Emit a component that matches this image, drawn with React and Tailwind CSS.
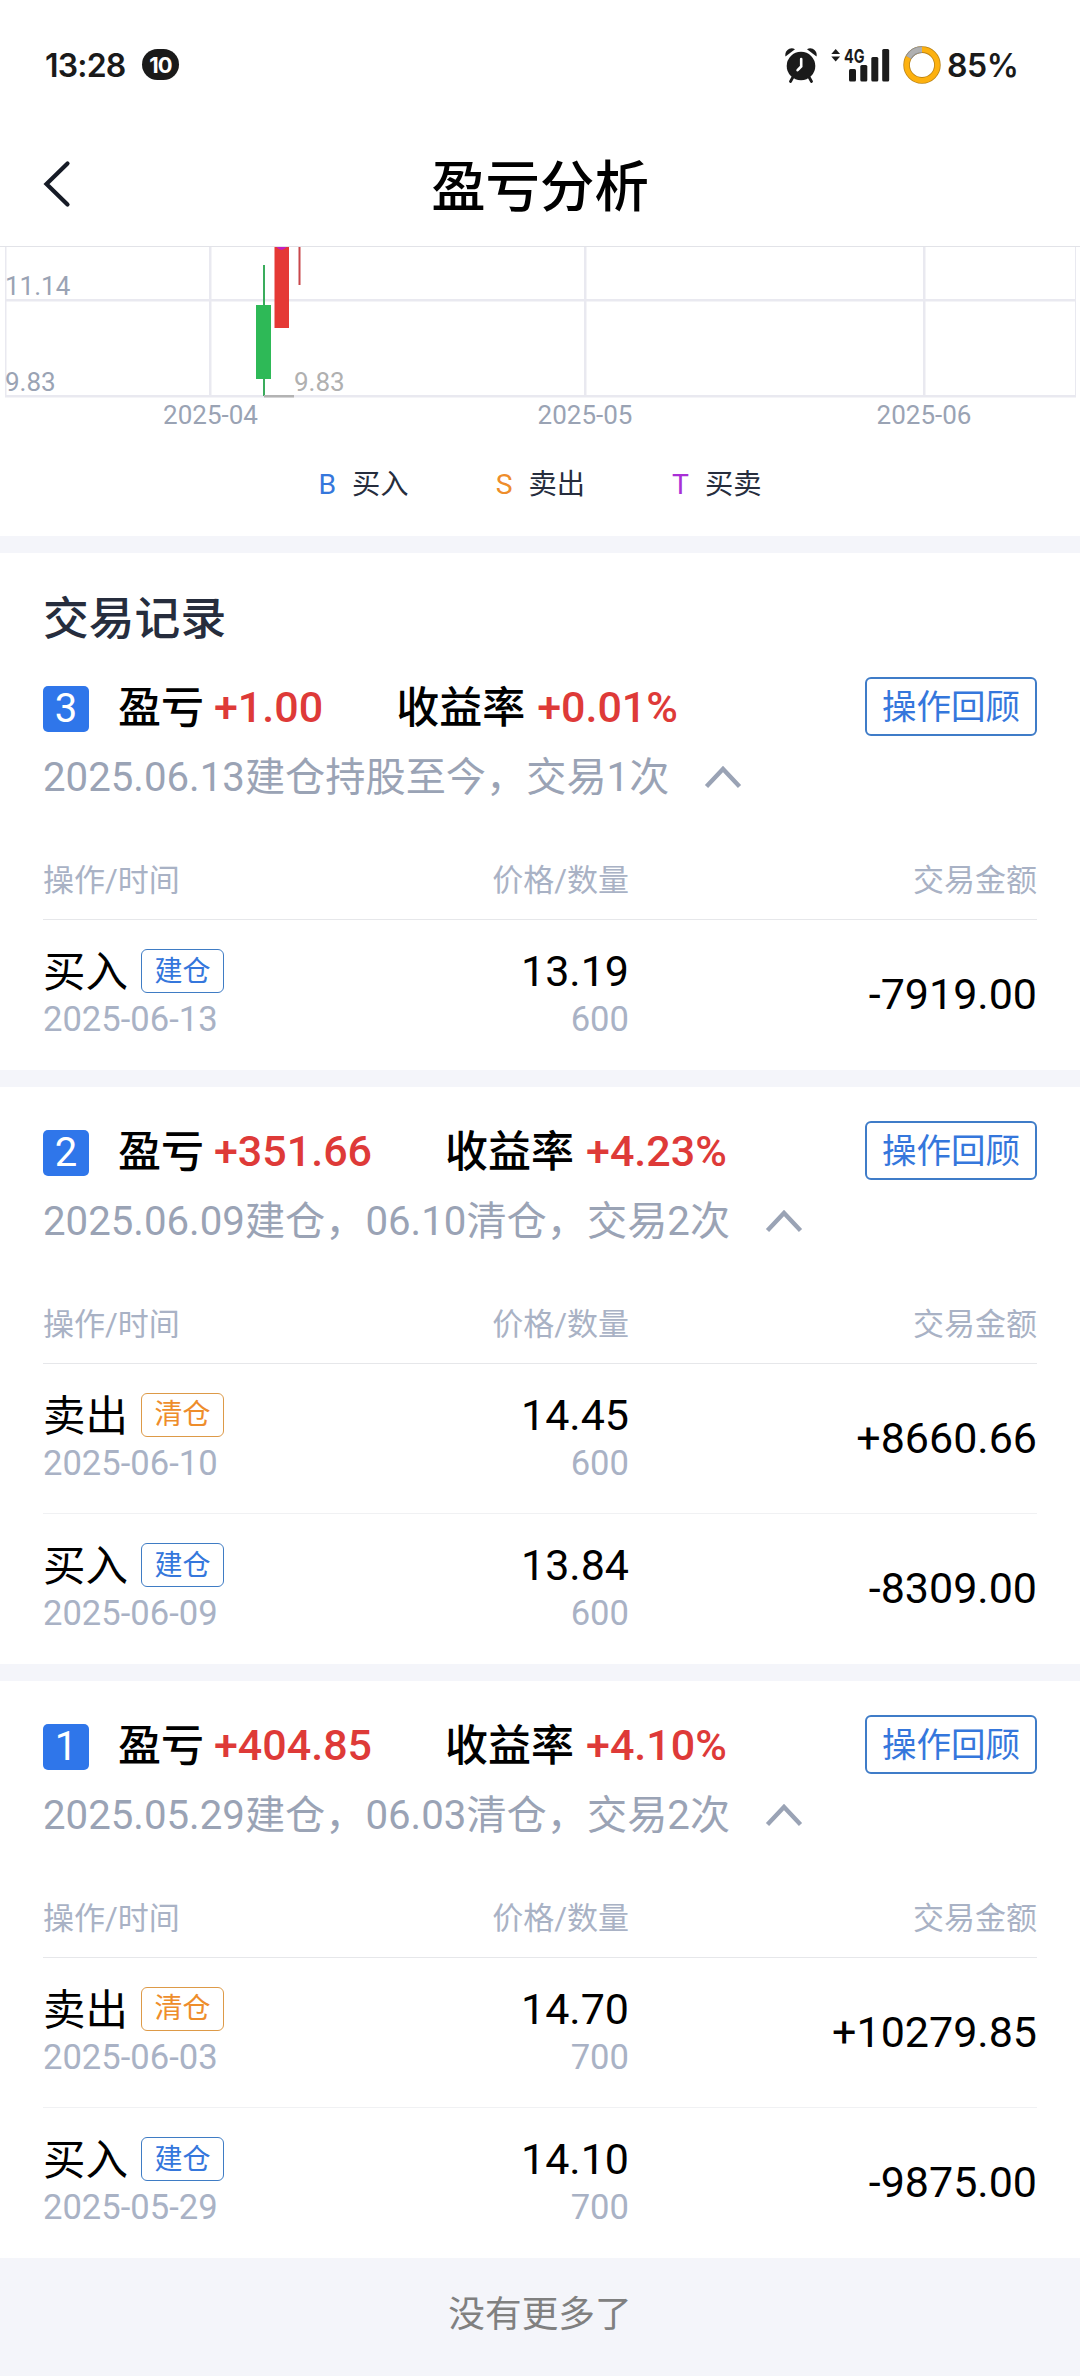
import clsx from "clsx";

const GROUPS = [
  {
    no: 3,
    profit: "+1.00",
    rate: "+0.01%",
    summary: "2025.06.13建仓持股至今，交易1次",
    trades: [{ type: "买入", tag: "建仓", date: "2025-06-13", price: "13.19", qty: "600", amount: "-7919.00" }],
  },
  {
    no: 2,
    profit: "+351.66",
    rate: "+4.23%",
    summary: "2025.06.09建仓，06.10清仓，交易2次",
    trades: [
      { type: "卖出", tag: "清仓", date: "2025-06-10", price: "14.45", qty: "600", amount: "+8660.66" },
      { type: "买入", tag: "建仓", date: "2025-06-09", price: "13.84", qty: "600", amount: "-8309.00" },
    ],
  },
  {
    no: 1,
    profit: "+404.85",
    rate: "+4.10%",
    summary: "2025.05.29建仓，06.03清仓，交易2次",
    trades: [
      { type: "卖出", tag: "清仓", date: "2025-06-03", price: "14.70", qty: "700", amount: "+10279.85" },
      { type: "买入", tag: "建仓", date: "2025-05-29", price: "14.10", qty: "700", amount: "-9875.00" },
    ],
  },
];

const LEGEND = [
  { mark: "B", label: "买入", color: "text-[#3577dc]" },
  { mark: "S", label: "卖出", color: "text-[#ee8d2b]" },
  { mark: "T", label: "买卖", color: "text-[#a92fd6]" },
];

function AlarmIcon() {
  return (
    <svg width="32" height="36" viewBox="0 0 32 36" fill="#1a1a1a">
      <path d="M0.5 9.5C-0.8 4 5 -0.8 10 2.2Z" />
      <path d="M31.5 9.5C32.8 4 27 -0.8 22 2.2Z" />
      <path d="M8 30L5.5 34.5M24 30L26.5 34.5" stroke="#1a1a1a" strokeWidth="2.8" strokeLinecap="round" />
      <circle cx="16" cy="19" r="14.3" />
      <path d="M16.2 12V19.5L12.6 23.2" fill="none" stroke="#fff" strokeWidth="2.6" strokeLinecap="round" />
    </svg>
  );
}

function SignalIcon() {
  return (
    <svg width="60" height="52" viewBox="0 -8 60 52" fill="#1a1a1a">
      <path d="M0.3 7L4.7 2L9.1 7Z" />
      <path d="M0.3 9.5L4.7 14.5L9.1 9.5Z" />
      <text x="13" y="15.5" textLength="20.5" lengthAdjust="spacingAndGlyphs" className="font-[Inter] text-[19px] font-bold">
        4G
      </text>
      <rect x="18" y="22" width="7" height="12.5" rx="1.5" />
      <rect x="29.3" y="18" width="7" height="16.5" rx="1.5" />
      <rect x="40.3" y="10" width="7" height="24.5" rx="1.5" />
      <rect x="51.2" y="2" width="7" height="32.5" rx="1.5" />
    </svg>
  );
}

function BatteryRing() {
  return (
    <svg width="38" height="38" viewBox="0 0 38 38" fill="none">
      <circle cx="19" cy="19" r="15.4" stroke="#b98317" strokeWidth="6.6" />
      <circle cx="19" cy="19" r="15.4" stroke="#fdb10f" strokeWidth="5" />
      <path d="M5.7 11.3A15.4 15.4 0 0 1 19 3.6" stroke="#8d8d8d" strokeWidth="6.6" />
      <path d="M5.7 11.3A15.4 15.4 0 0 1 19 3.6" stroke="#b0b0b0" strokeWidth="5" />
    </svg>
  );
}

function StatusBar() {
  return (
    <div className="flex h-[128px] items-center justify-between pl-[45px] pr-[63px] pt-[1px] font-[Inter] font-semibold text-[#1a1a1a]">
      <div className="flex items-center gap-[17px]">
        <span className="w-[80px] whitespace-nowrap pt-[2px] text-[32px] leading-none tracking-[-0.8px]">13:28</span>
        <span className="flex h-[31px] w-[37px] items-center justify-center rounded-full bg-[#1a1a1a] text-[22px] font-bold leading-none tracking-[-1px] text-white">
          10
        </span>
      </div>
      <div className="flex items-center">
        <AlarmIcon />
        <div className="ml-[14px]">
          <SignalIcon />
        </div>
        <div className="ml-[12px]">
          <BatteryRing />
        </div>
        <span className="ml-[6px] w-[70px] whitespace-nowrap pt-[2px] text-[32px] leading-none tracking-[-0.4px]">85%</span>
      </div>
    </div>
  );
}

function PriceChart() {
  return (
    <svg width="1080" height="192" viewBox="0 247 1080 192" className="block">
      {/* grid */}
      <g fill="#e9e9f0">
        <rect x="5" y="247" width="1.5" height="149" />
        <rect x="209" y="247" width="2.5" height="149" />
        <rect x="584" y="247" width="2.5" height="149" />
        <rect x="923" y="247" width="2.5" height="149" />
        <rect x="1075" y="247" width="1" height="149" />
        <rect x="5" y="299" width="1071" height="2.5" />
        <rect x="5" y="395" width="1071" height="2.5" />
      </g>

      {/* candles */}
      <rect x="263" y="265" width="2" height="131" fill="#3aac5c" />
      <rect x="256" y="305" width="15" height="74" fill="#2eb957" />
      <rect x="274.5" y="247" width="14.5" height="81" fill="#e53935" />
      <path d="M276.5 247H286.5Q281.5 253 276.5 247Z" fill="#c31fc0" />
      <rect x="298.5" y="247" width="2" height="38" fill="#c8474b" />
      <rect x="264" y="395" width="30" height="2.5" fill="#b3b3b3" />

      <g className="text-[26px]" fill="#9aa3b4">
        <text x="5" y="295">11.14</text>
        <text x="5" y="391">9.83</text>
        <text x="294" y="391" fill="#b0b0b0">9.83</text>
        <text x="210.5" y="424" textAnchor="middle">2025-04</text>
        <text x="585" y="424" textAnchor="middle">2025-05</text>
        <text x="924" y="424" textAnchor="middle">2025-06</text>
      </g>
    </svg>
  );
}

function TradeRow({ trade, last }) {
  return (
    <div className={clsx("flex h-[150px] items-center", !last && "border-b border-[#f0f1f3]")}>
      <div className="w-[293px]">
        <div className="flex h-[48px] items-center gap-[13px]">
          <span className="pt-[3px] text-[42.5px] leading-[45px] text-black">{trade.type}</span>
          <span
            className={clsx(
              "flex h-[44px] w-[83px] items-center justify-center rounded-[6px] border pt-px text-[28px] leading-none",
              trade.tag === "建仓" ? "border-[#3f7cc4] text-[#3577dc]" : "border-[#dd9a48] text-[#ee8d2b]"
            )}
          >
            {trade.tag}
          </span>
        </div>
        <div className="text-[34.6px] leading-[48px] text-[#a9b2c5]">{trade.date}</div>
      </div>
      <div className="w-[293px] text-right">
        <div className="text-[43px] leading-[48px] text-black">{trade.price}</div>
        <div className="text-[34.6px] leading-[48px] text-[#a9b2c5]">{trade.qty}</div>
      </div>
      <div className="flex-1 pb-[2px] text-right text-[43px] leading-[48px] text-black">{trade.amount}</div>
    </div>
  );
}

function TradeGroup({ group }) {
  return (
    <section className="px-[43px] pt-[34px]">
      <div className="flex h-[59px] items-center">
        <span className="mt-[4px] flex size-[46px] items-center justify-center rounded-[5px] bg-[#2f76ea] text-[40px] leading-none text-white">
          {group.no}
        </span>
        <div className="ml-[29px] flex items-center whitespace-nowrap text-[43px] font-medium leading-[56px] text-black">
          <span className="pt-[3px]">盈亏</span>
          <span className="ml-[10px] pt-px text-[#de3a38]">{group.profit}</span>
          <span className="ml-[73px] pt-[3px]">收益率</span>
          <span className="ml-[12px] pt-px text-[#de3a38]">{group.rate}</span>
        </div>
        <button className="ml-auto flex h-[59px] w-[172px] items-center justify-center rounded-[6px] border-2 border-[#3f7cc8] pt-px text-[34.5px] leading-none text-[#3577dc]">
          操作回顾
        </button>
      </div>

      <div className="flex h-[82px] items-center text-[40.2px] text-[#9aa3b5]">
        <span className="pt-[2px]">{group.summary}</span>
        <svg width="38" height="24" viewBox="0 0 38 24" fill="none" className="ml-[35px]">
          <path d="M2.5 21.5L19 4L35.5 21.5" stroke="#9aa3b5" strokeWidth="4.4" />
        </svg>
      </div>

      <div className="mt-[23px] flex h-[79px] items-center border-b border-[#e6e7ea] pt-[2px] text-[31px] text-[#a9b2c5]">
        <span className="w-[293px]">操作/时间</span>
        <span className="w-[293px] text-right">价格/数量</span>
        <span className="flex-1 text-right">交易金额</span>
      </div>
      {group.trades.map((trade, i) => (
        <TradeRow key={trade.date} trade={trade} last={i === group.trades.length - 1} />
      ))}
    </section>
  );
}

export default function App() {
  return (
    <div className="min-h-[2376px] w-[1080px] overflow-hidden bg-white font-[Roboto,'Noto_Sans_CJK_SC',sans-serif]">
      <StatusBar />

      <header className="flex h-[119px] items-center border-b border-[#e2e3e8] px-[43px]">
        <svg width="28" height="48" viewBox="0 0 28 48" fill="none" className="mb-[7px]">
          <path d="M24.5 3.5L3.5 24L24.5 44.5" stroke="#161b26" strokeWidth="4.2" strokeLinecap="round" />
        </svg>
        <h1 className="flex-1 pr-[28px] pt-[3px] text-center text-[54.4px] font-medium leading-none text-black">盈亏分析</h1>
      </header>

      <PriceChart />

      <div className="flex h-[97px] justify-center gap-[87px] pt-[24px] text-[28.3px] leading-[44px]">
        {LEGEND.map((item) => (
          <div key={item.mark} className="flex gap-[16px]">
            <span className={item.color}>{item.mark}</span>
            <span className="text-[#262d3d]">{item.label}</span>
          </div>
        ))}
      </div>

      <div className="h-[17px] bg-[#f4f5fa]" />

      <h2 className="flex h-[90px] items-end px-[43px] text-[45.8px] font-medium leading-[46px] text-[#262d3d]">交易记录</h2>

      {GROUPS.map((group, i) => (
        <div key={group.no}>
          {i > 0 && <div className="h-[17px] bg-[#f4f5fa]" />}
          <TradeGroup group={group} />
        </div>
      ))}

      <footer className="flex h-[118px] items-center justify-center bg-[#f4f5fa] pb-[4px] text-[36.7px] leading-none text-[#808080]">
        没有更多了
      </footer>
    </div>
  );
}
